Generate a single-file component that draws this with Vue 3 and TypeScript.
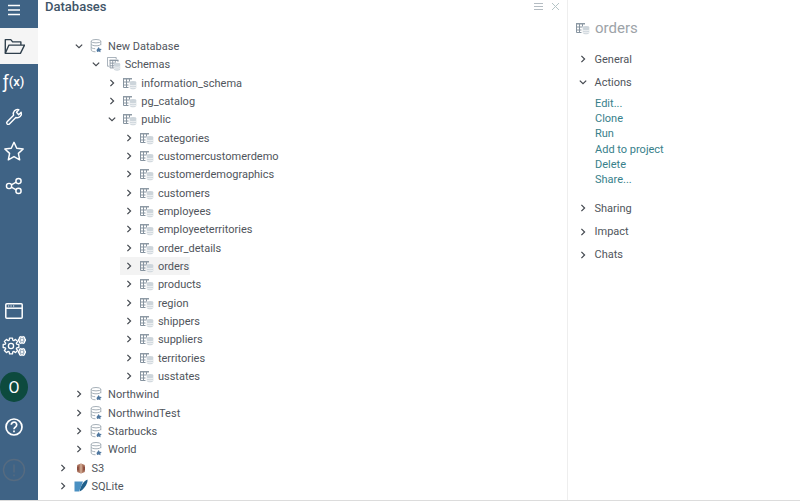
<script setup lang="ts">
interface Row { label: string; depth: number; open?: boolean; icon: string; selected?: boolean }
const tables = ['categories','customercustomerdemo','customerdemographics','customers','employees','employeeterritories','order_details','orders','products','region','shippers','suppliers','territories','usstates']
const rows: Row[] = [
  { label: 'New Database', depth: 1, open: true, icon: 'db' },
  { label: 'Schemas', depth: 2, open: true, icon: 'schemas' },
  { label: 'information_schema', depth: 3, icon: 'table' },
  { label: 'pg_catalog', depth: 3, icon: 'table' },
  { label: 'public', depth: 3, open: true, icon: 'table' },
  ...tables.map((t): Row => ({ label: t, depth: 4, icon: 'table', selected: t === 'orders' })),
  ...['Northwind','NorthwindTest','Starbucks','World'].map((t): Row => ({ label: t, depth: 1, icon: 'db' })),
  { label: 'S3', depth: 0, icon: 's3' },
  { label: 'SQLite', depth: 0, icon: 'sqlite' },
]
const actions = ['Edit...','Clone','Run','Add to project','Delete','Share...']
const indent = (d: number) => ({ paddingLeft: `${d * 16.6 + 17.5}px` })

function gear(cx: number, cy: number, outer: number, inner: number, teeth: number): string {
  const pts: string[] = []
  const step = (Math.PI * 2) / teeth
  for (let i = 0; i < teeth; i++) {
    const a = i * step
    const offs: [number, number][] = [[-0.32, inner], [-0.2, outer], [0.2, outer], [0.32, inner]]
    for (const [o, r] of offs) {
      const t = a + o * step * 1.2
      pts.push(`${(cx + Math.cos(t) * r).toFixed(2)} ${(cy + Math.sin(t) * r).toFixed(2)}`)
    }
  }
  return `M${pts.join('L')}Z`
}
const gearBig = gear(9, 12, 8, 6, 8)
const gearA = gear(20, 6, 3.6, 2.6, 6)
const gearB = gear(20, 18, 3.6, 2.6, 6)
</script>

<template>
  <div class="app">
    <svg width="0" height="0" class="defs">
      <symbol id="chev-r" viewBox="0 0 10 10"><path d="M3.4 1.800 6.600 5 3.400 8.200" fill="none" stroke="#43484f" stroke-width="1.200"/></symbol>
      <symbol id="chev-d" viewBox="0 0 10 10"><path d="M1.800 3.600 5 6.600 8.200 3.600" fill="none" stroke="#43484f" stroke-width="1.200"/></symbol>
      <symbol id="table" viewBox="0 0 14 14">
        <path d="M.5 2.500h8M.5 2.500v9h5M.5 6h6M.5 9h5M3.500 2.500v9M6.500 2.500v3" fill="none" stroke="#8794a0" stroke-width="1"/>
        <path d="M0 2h9v1.500H0z" fill="#8e9aa5"/>
        <ellipse cx="10" cy="6.500" rx="3.300" ry="1.400" fill="#cdd5db"/>
        <path d="M6.700 6.500v5.200c0 .9 1.500 1.500 3.300 1.500s3.300-.6 3.300-1.500V6.500z" fill="#cdd5db"/>
        <path d="M6.700 9c.6 1 6 1 6.600 0M6.700 11c.6 1 6 1 6.600 0" fill="none" stroke="#fff" stroke-width=".7"/>
      </symbol>
      <symbol id="schemas" viewBox="0 0 16 16">
        <path d="M.5.5h10v2M.5.5v10h2" fill="none" stroke="#98a4ae"/>
        <path d="M3 3h10v1.600H3z" fill="#8e9aa5"/>
        <path d="M3.500 3.500v9h5M3.500 7h6M3.500 10h5M6.500 3.500v9M9.500 3.500v3M12.500 3.500v2" fill="none" stroke="#8794a0"/>
        <ellipse cx="11.500" cy="8" rx="3.600" ry="1.500" fill="#cdd5db"/>
        <path d="M7.900 8v6c0 1 1.600 1.600 3.600 1.600s3.600-.6 3.600-1.600V8z" fill="#cdd5db"/>
        <path d="M7.900 11c.6 1 6.600 1 7.200 0M7.900 13c.6 1 6.600 1 7.200 0" fill="none" stroke="#fff" stroke-width=".7"/>
      </symbol>
      <symbol id="db" viewBox="0 0 14 14">
        <ellipse cx="6" cy="2.200" rx="4.800" ry="1.700" fill="none" stroke="#a6b0b8"/>
        <path d="M1.200 2.200v8.800c0 1 2 1.800 4.300 1.800M10.800 2.200v4M1.200 5c0 1 2 1.800 4.800 1.800s4.800-.8 4.800-1.800M1.200 8c0 1 1.800 1.700 4 1.700" fill="none" stroke="#a6b0b8"/>
        <path d="M6.500 11 8.800 8l.8 1.700 2.200.4-1.500 1.400.3 1.800-1.900-.9-1.600.7z" fill="#4f779f"/>
      </symbol>
      <symbol id="s3" viewBox="0 0 14 14">
        <path d="M7 2.500 10.800 4v7L7 12.500 3.200 11V4z" fill="#a9705a"/>
        <path d="M5.800 3h2.400v9H5.800z" fill="#c9a08a"/>
        <path d="M3 5.500h1.800v4H3zM9.200 5.500H11v4H9.200z" fill="#8a4d3f"/>
      </symbol>
      <symbol id="sqlite" viewBox="0 0 14 14">
        <path d="M.5 2.500h8.500L5 12.500H.5z" fill="#4a90c2"/>
        <path d="M5.500 12.500C6.500 7 9.500 2 13.500.5c.5 3-2.500 9-7 11.500z" fill="#1f5f8b"/>
      </symbol>
    </svg>

    <nav class="rail">
      <div class="rail-top">
        <button class="rail-btn tall">
          <svg width="18" height="18" viewBox="0 0 18 18"><path d="M3 4.500h12M3 9h12M3 13.500h12" stroke="#fff" stroke-width="1.600"/></svg>
        </button>
        <button class="rail-btn tall active">
          <svg width="22" height="22" viewBox="0 0 24 24" fill="none" stroke="#2f3f4c" stroke-width="1.500" stroke-linejoin="round"><path d="M2.500 20V5h6l2 2.500h9V11"/><path d="M2.500 20 6.500 11h17l-4.500 9z" /></svg>
        </button>
        <button class="rail-btn fx"><span class="f">ƒ</span><span>(x)</span></button>
        <button class="rail-btn">
          <svg width="20" height="20" viewBox="0 0 24 24" fill="none" stroke="#fff" stroke-width="1.700" stroke-linejoin="round"><path d="M15 7.500 17.800 4.500a5 5 0 0 0-6.300 6.500L3.800 18.800a1.900 1.900 0 0 0 2.700 2.700l7.700-7.700a5 5 0 0 0 6.400-6.400l-3 3z"/></svg>
        </button>
        <button class="rail-btn">
          <svg width="22" height="22" viewBox="0 0 24 24" fill="none" stroke="#fff" stroke-width="1.600" stroke-linejoin="round"><path d="M12 2.500 15 9l7 .8-5.200 4.800 1.400 7L12 18.100 5.800 21.600l1.400-7L2 9.800 9 9z"/></svg>
        </button>
        <button class="rail-btn">
          <svg width="18" height="18" viewBox="0 0 20 20" fill="none" stroke="#fff" stroke-width="1.600"><circle cx="4.500" cy="10" r="2.900"/><circle cx="15" cy="4.500" r="2.900"/><circle cx="15" cy="15.500" r="2.900"/><path d="M7 8.700 12.500 5.800M7 11.300l5.500 2.900"/></svg>
        </button>
      </div>
      <div class="rail-bottom">
        <button class="rail-btn b">
          <svg width="20" height="20" viewBox="0 0 20 20" fill="none" stroke="#fff" stroke-width="1.500"><rect x="1.800" y="2.800" width="16.400" height="14.400" rx="1"/><path d="M1.800 7.200h16.400"/><path d="M4 5h1.200M6.500 5h1.200M9 5h1.200" stroke-width="1.200"/></svg>
        </button>
        <button class="rail-btn b gears">
          <svg width="24" height="24" viewBox="0 0 24 24" fill="none" stroke="#fff" stroke-linejoin="round" stroke-width="1.300">
            <path :d="gearBig"/>
            <circle cx="9" cy="12" r="2.600"/>
            <path :d="gearA"/>
            <circle cx="20" cy="6" r="1"/>
            <path :d="gearB"/>
            <circle cx="20" cy="18" r="1"/>
          </svg>
        </button>
        <div class="avatar">O</div>
        <button class="rail-btn b help">
          <svg width="20" height="20" viewBox="0 0 20 20" fill="none" stroke="#fff" stroke-width="1.700"><circle cx="10" cy="10" r="8"/><path d="M7.300 7.800a2.700 2.700 0 1 1 4.200 2.200c-1 .7-1.500 1.100-1.500 2.200"/><path d="M10 13.600v1.600"/></svg>
        </button>
        <button class="rail-btn b alert">
          <svg width="24" height="24" viewBox="0 0 24 24" fill="none" stroke="#566b80" stroke-width="1.400"><circle cx="12" cy="12" r="10.500"/><path d="M12 6.500v8M12 16.500v1.800"/></svg>
        </button>
      </div>
    </nav>

    <section class="main">
      <header class="head">
        <span class="title">Databases</span>
        <div class="head-tools">
          <svg width="11" height="9" viewBox="0 0 11 9"><path d="M1 1.500h9M1 4.500h9M1 7.500h9" stroke="#b4bcc2" stroke-width="1"/></svg>
          <svg width="9" height="9" viewBox="0 0 9 9"><path d="M1 1l7 7M8 1 1 8" stroke="#b4c4c6" stroke-width="1"/></svg>
        </div>
      </header>
      <div class="tree">
        <div v-for="r in rows" :key="r.label" class="row" :style="indent(r.depth)">
          <div class="cell" :class="{ selected: r.selected }">
            <svg class="chev" width="10" height="10"><use :href="r.open ? '#chev-d' : '#chev-r'"/></svg>
            <svg class="ico" width="14" height="14"><use :href="'#' + r.icon"/></svg>
            <span class="label">{{ r.label }}</span>
          </div>
        </div>
      </div>
    </section>

    <aside class="side">
      <div class="side-title">
        <svg width="14" height="14"><use href="#table"/></svg>
        <span>orders</span>
      </div>
      <div class="sec"><svg width="10" height="10"><use href="#chev-r"/></svg><span>General</span></div>
      <div class="sec"><svg width="10" height="10"><use href="#chev-d"/></svg><span>Actions</span></div>
      <ul class="actions"><li v-for="a in actions" :key="a">{{ a }}</li></ul>
      <div class="sec"><svg width="10" height="10"><use href="#chev-r"/></svg><span>Sharing</span></div>
      <div class="sec"><svg width="10" height="10"><use href="#chev-r"/></svg><span>Impact</span></div>
      <div class="sec"><svg width="10" height="10"><use href="#chev-r"/></svg><span>Chats</span></div>
    </aside>
  </div>
</template>

<style>
html, body { margin: 0; background: #fff; overflow: hidden; }
</style>

<style scoped>
.app { display: flex; width: 800px; height: 501px; box-sizing: border-box; border-bottom: 1px solid #dcdcdc; overflow: hidden; font-family: Roboto, "Liberation Sans", sans-serif; font-size: 11px; color: #50555c; background: #fff; }
.defs { position: absolute; }
.rail { width: 38px; flex: none; background: #3f6385; display: flex; flex-direction: column; justify-content: space-between; padding-bottom: 12.500px; box-sizing: border-box; }
.rail-top, .rail-bottom { display: flex; flex-direction: column; }
.rail-top { margin-top: -8px; }
.rail-btn { width: 38px; height: 34.800px; padding: 0 11px 0 0; border: 0; background: none; display: flex; align-items: center; justify-content: center; color: #fff; font-family: Roboto, sans-serif; }
.rail-btn.tall { height: 36px; }
.rail-btn.b { height: 35px; }
.rail-btn.active { background: #f5f5f5; }
.fx { font-size: 13px; font-weight: 500; }
.fx .f { font-size: 18px; font-weight: 400; }
.gears { margin-bottom: 8.500px; }
.avatar { width: 28px; height: 30px; margin: 0 0 7.500px; background: #0d4a3e; color: #fff; border-radius: 50%; display: flex; align-items: center; justify-content: center; font-size: 16px; }
.help { margin-bottom: 8px; }
.main { width: 529px; flex: none; border-right: 1px solid #eeeeee; display: flex; flex-direction: column; }
.head { display: flex; justify-content: space-between; padding: 0 7px; height: 37px; }
.title { font-size: 13px; font-weight: 500; line-height: 13px; color: #3f5568; }
.head-tools { display: flex; gap: 7px; padding-top: 2px; align-items: flex-start; }
.tree { display: flex; flex-direction: column; }
.row { height: 18.330px; display: flex; }
.cell { display: flex; align-items: center; height: 18.330px; padding: 0 0 0 2px; }
.cell.selected { background: #f3f3f3; margin-left: -2px; padding-left: 4px; padding-right: 1px; }
.chev { margin-right: 6px; flex: none; }
.ico { margin-right: 4px; flex: none; }
.label { white-space: nowrap; position: relative; top: .5px; }
.side { flex: 1; padding: 18px 8px 0 8px; }
.side-title { display: flex; align-items: center; gap: 5px; font-size: 15px; color: #9da3a8; height: 20px; margin-bottom: 9.500px; }
.sec { display: flex; align-items: center; gap: 7px; height: 23.300px; font-size: 11px; padding-left: 1.500px; }
.actions { list-style: none; margin: 2px 0 9.500px; padding: 0 0 0 19px; color: #37808a; }
.actions li { height: 15.200px; line-height: 15.200px; }
</style>
